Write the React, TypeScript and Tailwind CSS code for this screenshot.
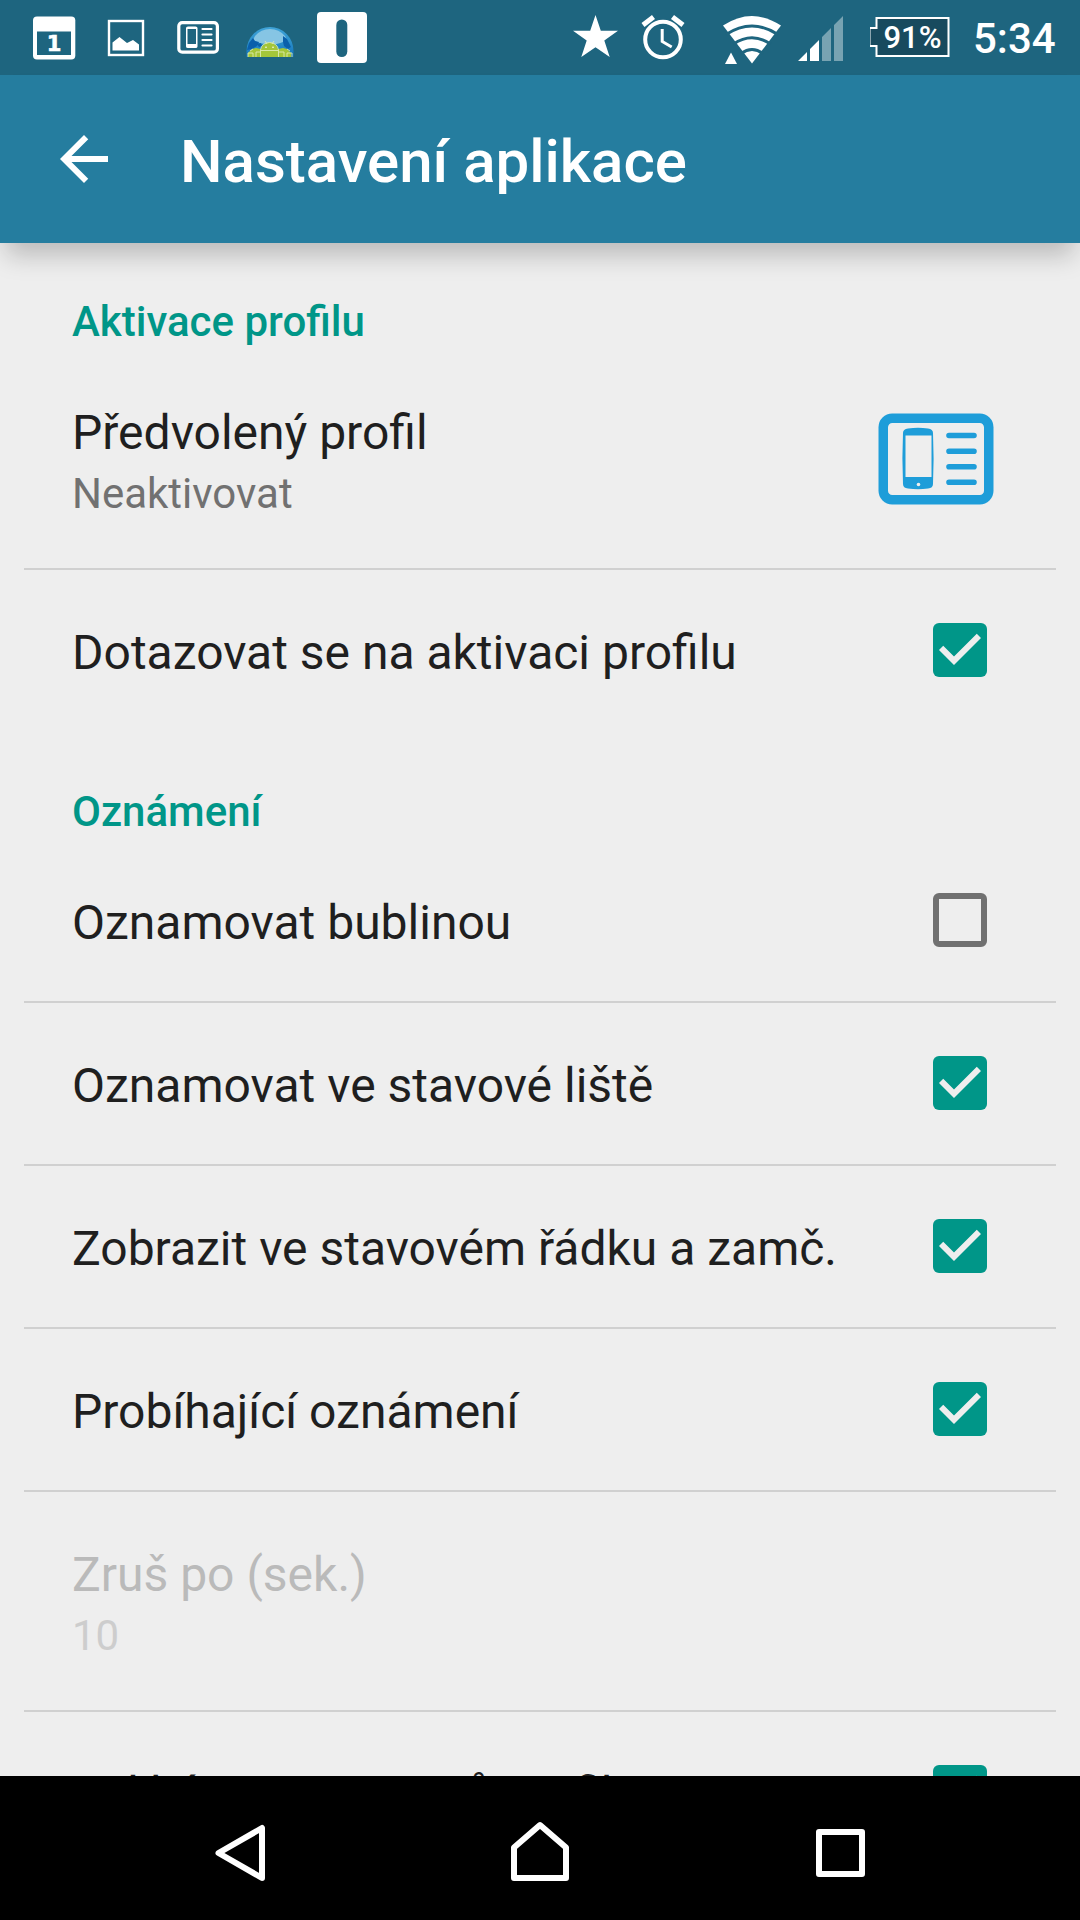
interface PreferenceProps {
    title: string;
    summary?: string;
    checked?: boolean;
    disabled?: boolean;
    last?: boolean;
    icon?: React.ReactNode;
}

function ProfileIcon() {
    return (
        <svg width="116" height="92" viewBox="0 0 116 92" fill="none">
            <rect x="5.25" y="5.25" width="105.5" height="81.5" rx="9" stroke="#1e9dd9" strokeWidth="9.5" />
            <path
                d="M25 20q0-4 5-4.600q10-1.200 20 0q5 .6 5 4.600q1.200 26 0 51q0 4-5 4.600q-10 1.200-20 0q-5-.6-5-4.600q-1.200-26 0-51zM27.500 22.500v41.500h26v-41.500z"
                fill="#1e9dd9"
                fillRule="evenodd"
            />
            <circle cx="40.500" cy="71.500" r="1.800" fill="#eee" />
            <path d="M71 22.500h25M71 38.200h25M71 53.800h25M71 69.200h25" stroke="#1e9dd9" strokeWidth="5.600" strokeLinecap="round" />
        </svg>
    );
}

function Checkbox({ checked }: { checked: boolean }) {
    if (!checked) {
        return <div className="w-[54px] h-[54px] rounded-md border-6 border-[#707070]" />;
    }
    return (
        <div className="w-[54px] h-[54px] rounded-md bg-[#009688]">
            <svg width="54" height="54" viewBox="3 3 18 18">
                <path d="M10 17l-5-5 1.410-1.410L10 14.170l7.590-7.590L19 8l-9 9z" fill="#eee" />
            </svg>
        </div>
    );
}

function Category({ title }: { title: string }) {
    return <h2 className="h-[50px] pl-[72px] text-[42px] leading-[50px] font-medium text-[#009688]">{title}</h2>;
}

function Preference({ title, summary, checked, disabled, last, icon }: PreferenceProps) {
    return (
        <div className="px-6">
            <div
                className={
                    "flex items-center justify-between pl-12 " +
                    (summary ? "h-[218px] " : "h-[161px] ") +
                    (disabled ? "text-[#bababa]" : "text-[#1f1f1f]")
                }
            >
                <div className={"whitespace-nowrap " + (summary ? "pt-[5px]" : "pt-1")}>
                    <p className="text-[48px] leading-[56px]">{title}</p>
                    {summary && (
                        <p className={"text-[42px] leading-[50px] mt-2 " + (disabled ? "text-[#cdcdcd]" : "text-[#717171]")}>
                            {summary}
                        </p>
                    )}
                </div>
                {icon && <div className="mr-[62px]">{icon}</div>}
                {checked !== undefined && (
                    <div className="mr-[69px] pb-px">
                        <Checkbox checked={checked} />
                    </div>
                )}
            </div>
            {!last && <div className="h-[2px] bg-[#d0d0d0]" />}
        </div>
    );
}

function StatusBar() {
    return (
        <div className="flex justify-between h-[75px] bg-[#1e657f] shrink-0">
            <svg width="400" height="75" viewBox="0 0 400 75" fill="none">
                {/* calendar */}
                <rect x="33" y="16.500" width="42.300" height="43" rx="4" fill="#fff" />
                <path d="M37 31.500h34v23.500H37z" fill="#1e657f" />
                <text x="54" y="51.300" textAnchor="middle" fontSize="21" fontWeight="700" fill="#fff" stroke="#fff" strokeWidth=".6" fontFamily="DejaVu Sans">1</text>
                {/* gallery */}
                <rect x="109" y="21" width="34" height="34" stroke="#fff" strokeWidth="2.400" />
                <path d="M112.500 50.500v-8l7-5.500 7.500 6 6-3 6 4.500v6z" fill="#fff" />
                {/* active profile */}
                <rect x="178.800" y="22.600" width="38.600" height="29.600" rx="3.500" stroke="#fff" strokeWidth="3.200" />
                <path
                    d="M186 28q0-1.500 2-1.500h7.500q2 0 2 1.500v18.500q0 1.500-2 1.500h-7.500q-2 0-2-1.500zM187.500 29v15h8.500v-15z"
                    fill="#fff"
                    fillRule="evenodd"
                />
                <path d="M202.500 29h9M202.500 34.500h9M202.500 40h9M202.500 45.500h9" stroke="#fff" strokeWidth="2.200" strokeLinecap="round" />
                {/* globe with robots */}
                <defs>
                    <linearGradient id="globe" x1="0" y1="27" x2="0" y2="57" gradientUnits="userSpaceOnUse">
                        <stop stopColor="#3fa3d8" />
                        <stop offset=".5" stopColor="#2b8fcb" />
                        <stop offset="1" stopColor="#1272bd" />
                    </linearGradient>
                </defs>
                <path d="M246.500 57v-6a23.500 24 0 0 1 47 0v6z" fill="url(#globe)" />
                <path d="M255 36q6-7 15-7t15 7l2 4q-8 5-17 4-9 1-17-4z" fill="#86c5e4" />
                <path d="M249 43l4-5 2 3 4 1-2 4-5 3-5 1zM283 36l4 3 4 8-3 2-4-3-1-4zM257 44l4-1 1 3-3 1z" fill="#0a5fab" />
                <path d="M248 57v-4l2-2 2-2 4-1 5 1q2-6 8.500-6.500 6.500.5 8.500 6.500l5-1 4 1 2 2 2 2v4z" fill="#a4c639" />
                <path
                    d="M248 57v-4h5v4M256 57v-5h4M260.500 57v-7q1-7 9-7.500 8 .5 9 7.500v7M279 52h5v5M292 57v-4h-5v4M261 50.500h17M265 41l2 3M274 41l-2 3M250 51l3-2M290 51l-3-2"
                    stroke="#dcebb0"
                    strokeWidth=".9"
                />
                <circle cx="266" cy="47.200" r=".8" fill="#fff" />
                <circle cx="273" cy="47.200" r=".8" fill="#fff" />
                {/* capsule */}
                <rect x="317" y="12" width="50" height="51" rx="4" fill="#fff" />
                <rect x="336.300" y="19.500" width="11" height="37.500" rx="5.500" fill="#1e657f" />
            </svg>
            <div className="flex">
                <svg width="310" height="75" viewBox="560 0 310 75" fill="none">
                    <path d="M595.500 15l5.300 15.700h17.200l-13.700 9.800 5.400 16.500-14.200-9.800-14.200 9.800 5.400-16.500-13.700-9.800h17.200z" fill="#fff" />
                    {/* alarm */}
                    <circle cx="663" cy="39.500" r="17.800" stroke="#fff" strokeWidth="4" />
                    <path d="M662.200 29v12.500l9.500 5.500" stroke="#fff" strokeWidth="3" />
                    <path d="M643 25l10.500-8M683 25l-10.500-8" stroke="#fff" strokeWidth="5" />
                    {/* wifi */}
                    <path d="M752 63.500L723 25.500Q752 6.500 781 25.500z" fill="#fff" />
                    <path d="M726 34.500Q752 17.500 778 34.500M733.500 44Q752 31.500 770.500 44M741 53.500Q752 45.500 763 53.500" stroke="#1e657f" strokeWidth="3" />
                    <path d="M731 52.500l6 11.500h-12z" fill="#fff" />
                    {/* signal */}
                    <path d="M798 61l9-9v9zM810 61v-12l9-9v21z" fill="#fff" />
                    <path d="M822 61V37l9-9v33zM834 61V25l9-9v45z" fill="#78a3b2" />
                </svg>
                <div className="relative w-[82px] h-[75px]">
                    <svg className="absolute inset-0" width="82" height="75" fill="none">
                        <path d="M7 18h72v38h-72v-10h-7v-18h7z" fill="#184a5e" stroke="#fff" strokeWidth="2" className="translate-x-[-0.5px]" />
                    </svg>
                    <span className="absolute left-[13.500px] top-[19.500px] text-[31px] leading-[36px] font-medium text-white">91%</span>
                </div>
                <span className="w-[128px] pl-[21px] pt-[14px] text-[42px] leading-[50px] font-medium text-white">5:34</span>
            </div>
        </div>
    );
}

export default function App() {
    return (
        <div className="flex flex-col w-[1080px] h-[1920px] overflow-hidden bg-[#eee] font-['Roboto',sans-serif]">
            <StatusBar />
            <header className="flex items-center h-[168px] shrink-0 pl-12 bg-[#257d9f] shadow-[0_18px_24px_-6px_rgba(0,0,0,0.22)]">
                <svg width="72" height="72" viewBox="0 0 24 24" fill="#fff">
                    <path d="M20 11H7.830l5.590-5.590L12 4l-8 8 8 8 1.410-1.410L7.830 13H20v-2z" />
                </svg>
                <h1 className="ml-[60px] mt-[6px] text-[60px] leading-[70px] font-medium text-white">Nastavení aplikace</h1>
            </header>
            <main className="flex-1 min-h-0 overflow-hidden">
                <div className="pt-[54px] pb-[3px]">
                    <Category title="Aktivace profilu" />
                </div>
                <Preference title="Předvolený profil" summary="Neaktivovat" icon={<ProfileIcon />} />
                <Preference title="Dotazovat se na aktivaci profilu" checked last />
                <div className="pt-[56px] pb-[3px]">
                    <Category title="Oznámení" />
                </div>
                <Preference title="Oznamovat bublinou" checked={false} />
                <Preference title="Oznamovat ve stavové liště" checked />
                <Preference title="Zobrazit ve stavovém řádku a zamč." checked />
                <Preference title="Probíhající oznámení" checked />
                <Preference title="Zruš po (sek.)" summary="10" disabled />
                <Preference title="Indikátor parametrů profilu" checked />
            </main>
            <nav className="flex items-center justify-center h-[144px] shrink-0 bg-black">
                <svg width="660" height="144" viewBox="210 1776 660 144" fill="none" stroke="#fff" strokeWidth="6" strokeLinejoin="round">
                    <path d="M262 1828v50l-43.500-25z" />
                    <path d="M514 1847.500l26-22.500 26 22.500v30.500h-52z" />
                    <rect x="819" y="1832" width="43" height="42" />
                </svg>
            </nav>
        </div>
    );
}
